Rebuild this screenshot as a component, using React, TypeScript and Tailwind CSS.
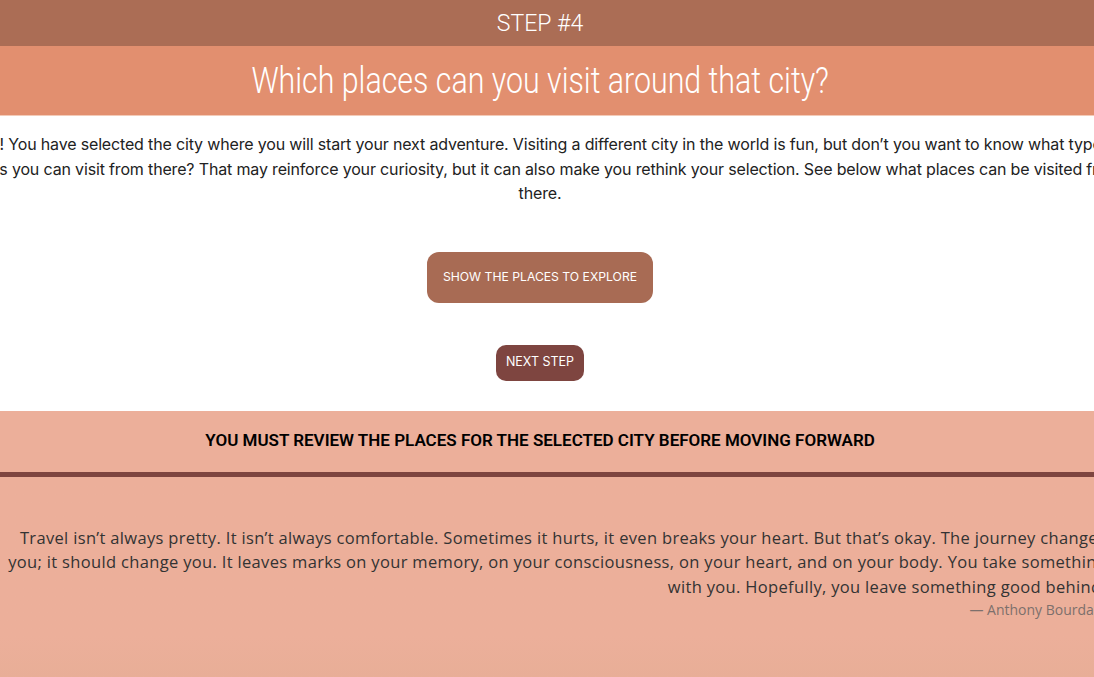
import * as React from 'react';

const intro =
  "Great! You have selected the city where you will start your next adventure. Visiting a different city in the world is fun, but don\u2019t you want to know what type of places you can visit from there? That may reinforce your curiosity, but it can also make you rethink your selection. See below what places can be visited from there.";

const quote =
  "Travel isn\u2019t always pretty. It isn\u2019t always comfortable. Sometimes it hurts, it even breaks your heart. But that\u2019s okay. The journey changes you; it should change you. It leaves marks on your memory, on your consciousness, on your heart, and on your body. You take something with you. Hopefully, you leave something good behind.";

export default function App() {
  return (
    <div className="w-full h-[677px] overflow-hidden bg-white flex flex-col">
      <header className="h-[46px] bg-[#ab6d55] flex items-center justify-center pr-[14px]">
        <span className="inline-block scale-x-[0.96] text-white text-[24px] font-light font-['Roboto',sans-serif]">
          STEP #4
        </span>
      </header>

      <div className="h-[70px] bg-[#e28f6f] border-b border-[#f3cbb8] flex items-center justify-center pr-[14px]">
        <h1 className="inline-block whitespace-nowrap scale-x-[0.82] text-white text-[37px] font-light font-['Roboto',sans-serif]">
          Which places can you visit around that city?
        </h1>
      </div>

      <section className="flex flex-col items-center pt-[16px] pr-[14px]">
        <p className="w-[1184px] shrink-0 text-center text-[16px] tracking-[-0.01em] leading-[24.5px] text-[#222] font-['Inter',sans-serif]">
          {intro}
        </p>

        <button className="mt-[46px] h-[51px] px-[16px] rounded-[12px] bg-[#a86b54] text-white text-[12.2px] uppercase font-['Inter',sans-serif]">
          Show the places to explore
        </button>

        <button className="mt-[42px] h-[36px] px-[10px] rounded-[10px] bg-[#7e4540] text-white text-[12.5px] uppercase font-['Inter',sans-serif]">
          Next step
        </button>
      </section>

      <div className="mt-[30px] h-[66px] bg-[#ecaf9a] flex items-center justify-center pr-[14px] border-b-[5px] border-[#7e4540]">
        <span className="text-black text-[17px] font-semibold font-['Roboto',sans-serif]">
          YOU MUST REVIEW THE PLACES FOR THE SELECTED CITY BEFORE MOVING FORWARD
        </span>
      </div>

      <section className="flex-1 bg-gradient-to-b from-[#ecaf9a] from-80% to-[#e8ae97] flex justify-end pt-[49px] mr-[-12px]">
        <figure className="w-[1110px] shrink-0 text-right font-['Open_Sans',sans-serif]">
          <blockquote className="text-[16.5px] leading-[24.5px] text-[#333] tracking-[0.02em]">
            {quote}
          </blockquote>
          <figcaption className="text-[14px] text-[#7d706c]">
            — Anthony Bourdain
          </figcaption>
        </figure>
      </section>
    </div>
  );
}
